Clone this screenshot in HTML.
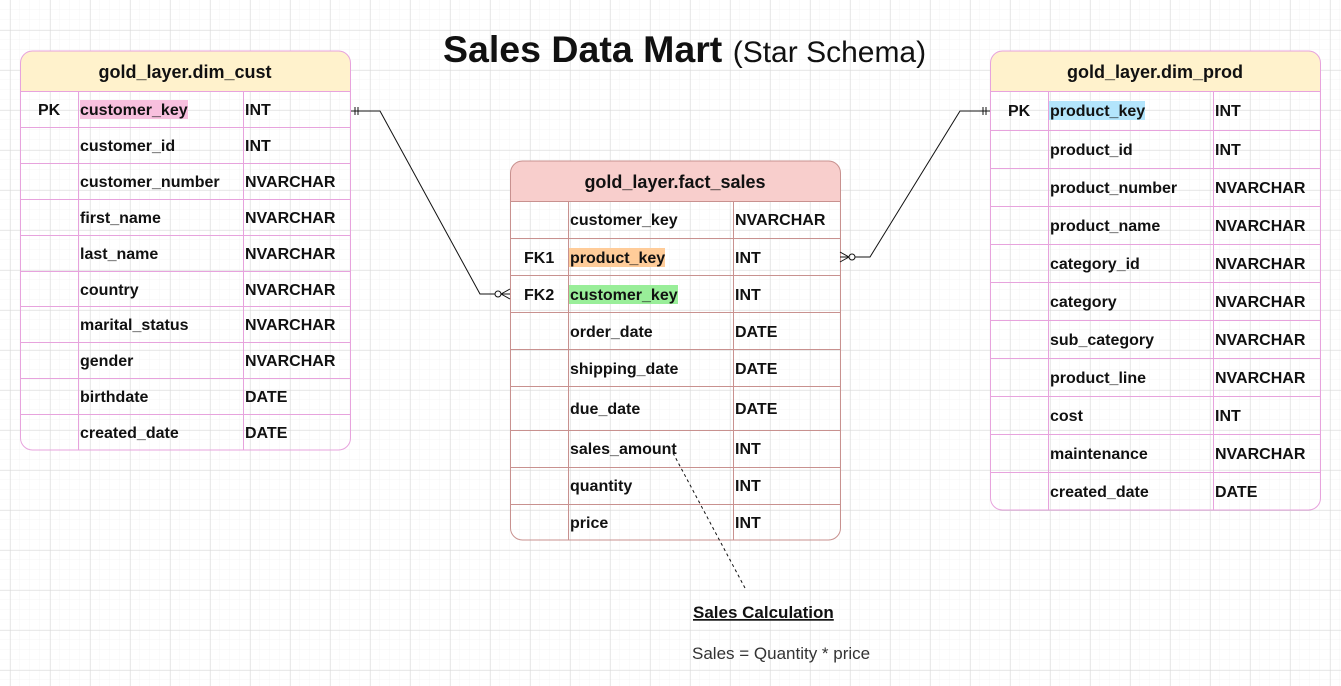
<!DOCTYPE html>
<html><head><meta charset="utf-8"><style>
html,body{margin:0;padding:0;background:#fff;}
svg{display:block;}
text{font-family:"Liberation Sans",Arial,sans-serif;}
.f{font-size:16px;font-weight:bold;fill:#111;}
.h{font-size:18px;font-weight:bold;fill:#111;}
</style></head><body>
<svg width="1341" height="686" viewBox="0 0 1341 686" xmlns="http://www.w3.org/2000/svg">
<defs>
<pattern id="mi" width="10" height="10" patternUnits="userSpaceOnUse" x="0" y="0">
<path d="M10 0V10M0 10H10" stroke="#f4f4f4" stroke-width="1" fill="none"/>
</pattern>
<pattern id="ma" width="40" height="40" patternUnits="userSpaceOnUse" x="10.5" y="30.5">
<path d="M0 0V40M0 0H40" stroke="#d6d6d6" stroke-width="1" fill="none"/>
</pattern>
</defs>
<rect width="1341" height="686" fill="url(#mi)"/>
<rect width="1341" height="686" fill="url(#ma)"/>

<!-- Title -->
<text x="443" y="62" style="font-size:37.5px;font-weight:bold;fill:#111">Sales Data Mart <tspan style="font-size:30px;font-weight:normal">(Star Schema)</tspan></text>

<!-- dim_cust -->
<g stroke="#e7a3dd" stroke-width="1" fill="none">
<path d="M20.5 91.5V63a12 12 0 0 1 12-12h306a12 12 0 0 1 12 12v28.5Z" fill="#fff2cc"/>
<path d="M20.5 91.5V438a12 12 0 0 0 12 12h306a12 12 0 0 0 12-12V91.5"/>
<path d="M20.5 127.5H350.5M20.5 163.5H350.5M20.5 199.5H350.5M20.5 235.5H350.5M20.5 271.5H350.5M20.5 306.5H350.5M20.5 342.5H350.5M20.5 378.5H350.5M20.5 414.5H350.5M78.5 91.5V450M243.5 91.5V450"/>
</g>
<text x="185" y="78" text-anchor="middle" class="h">gold_layer.dim_cust</text>
<rect x="80" y="100" width="108" height="19" fill="#f8c0de"/>
<g class="f">
<text x="38" y="115">PK</text><text x="80" y="115">customer_key</text><text x="245" y="115">INT</text>
<text x="80" y="151">customer_id</text><text x="245" y="151">INT</text>
<text x="80" y="187">customer_number</text><text x="245" y="187">NVARCHAR</text>
<text x="80" y="223">first_name</text><text x="245" y="223">NVARCHAR</text>
<text x="80" y="259">last_name</text><text x="245" y="259">NVARCHAR</text>
<text x="80" y="295">country</text><text x="245" y="295">NVARCHAR</text>
<text x="80" y="330">marital_status</text><text x="245" y="330">NVARCHAR</text>
<text x="80" y="366">gender</text><text x="245" y="366">NVARCHAR</text>
<text x="80" y="402">birthdate</text><text x="245" y="402">DATE</text>
<text x="80" y="438">created_date</text><text x="245" y="438">DATE</text>
</g>

<!-- fact_sales -->
<g stroke="#c8918f" stroke-width="1" fill="none">
<path d="M510.5 201.5V173a12 12 0 0 1 12-12h306a12 12 0 0 1 12 12v28.5Z" fill="#f8cecc"/>
<path d="M510.5 201.5V528a12 12 0 0 0 12 12h306a12 12 0 0 0 12-12V201.5"/>
<path d="M510.5 238.5H840.5M510.5 275.5H840.5M510.5 312.5H840.5M510.5 349.5H840.5M510.5 386.5H840.5M510.5 430.5H840.5M510.5 467.5H840.5M510.5 504.5H840.5M568.5 201.5V540M733.5 201.5V540"/>
</g>
<text x="675" y="188" text-anchor="middle" class="h">gold_layer.fact_sales</text>
<rect x="569" y="248" width="96" height="19" fill="#ffcc99"/>
<rect x="569" y="285" width="109" height="19" fill="#99ee99"/>
<g class="f">
<text x="570" y="225">customer_key</text><text x="735" y="225">NVARCHAR</text>
<text x="524" y="263">FK1</text><text x="570" y="263">product_key</text><text x="735" y="263">INT</text>
<text x="524" y="300">FK2</text><text x="570" y="300">customer_key</text><text x="735" y="300">INT</text>
<text x="570" y="337">order_date</text><text x="735" y="337">DATE</text>
<text x="570" y="374">shipping_date</text><text x="735" y="374">DATE</text>
<text x="570" y="414">due_date</text><text x="735" y="414">DATE</text>
<text x="570" y="454">sales_amount</text><text x="735" y="454">INT</text>
<text x="570" y="491">quantity</text><text x="735" y="491">INT</text>
<text x="570" y="528">price</text><text x="735" y="528">INT</text>
</g>

<!-- dim_prod -->
<g stroke="#e7a3dd" stroke-width="1" fill="none">
<path d="M990.5 91.5V63a12 12 0 0 1 12-12h306a12 12 0 0 1 12 12v28.5Z" fill="#fff2cc"/>
<path d="M990.5 91.5V498a12 12 0 0 0 12 12h306a12 12 0 0 0 12-12V91.5"/>
<path d="M990.5 130.5H1320.5M990.5 168.5H1320.5M990.5 206.5H1320.5M990.5 244.5H1320.5M990.5 282.5H1320.5M990.5 320.5H1320.5M990.5 358.5H1320.5M990.5 396.5H1320.5M990.5 434.5H1320.5M990.5 472.5H1320.5M1048.5 91.5V510M1213.5 91.5V510"/>
</g>
<text x="1155" y="78" text-anchor="middle" class="h">gold_layer.dim_prod</text>
<rect x="1049" y="101" width="96" height="19" fill="#b3e5fc"/>
<g class="f">
<text x="1008" y="116">PK</text><text x="1050" y="116">product_key</text><text x="1215" y="116">INT</text>
<text x="1050" y="155">product_id</text><text x="1215" y="155">INT</text>
<text x="1050" y="193">product_number</text><text x="1215" y="193">NVARCHAR</text>
<text x="1050" y="231">product_name</text><text x="1215" y="231">NVARCHAR</text>
<text x="1050" y="269">category_id</text><text x="1215" y="269">NVARCHAR</text>
<text x="1050" y="307">category</text><text x="1215" y="307">NVARCHAR</text>
<text x="1050" y="345">sub_category</text><text x="1215" y="345">NVARCHAR</text>
<text x="1050" y="383">product_line</text><text x="1215" y="383">NVARCHAR</text>
<text x="1050" y="421">cost</text><text x="1215" y="421">INT</text>
<text x="1050" y="459">maintenance</text><text x="1215" y="459">NVARCHAR</text>
<text x="1050" y="497">created_date</text><text x="1215" y="497">DATE</text>
</g>

<!-- connectors -->
<g stroke="#111" stroke-width="1" fill="none">
<path d="M351 111H380L480 294H495"/>
<path d="M355 107V115M358 107V115"/>
<circle cx="498" cy="294" r="3"/>
<path d="M501 294H510M501 294L510 289M501 294L510 299"/>
<path d="M990 111H960L870 257H855"/>
<path d="M986 107V115M983 107V115"/>
<circle cx="852" cy="257" r="3"/>
<path d="M849 257H840M849 257L840 252M849 257L840 262"/>
<path d="M673 453L745 588" stroke-dasharray="3 3"/>
</g>

<text x="693" y="618" style="font-size:17px;font-weight:bold;fill:#111;text-decoration:underline">Sales Calculation</text>
<text x="692" y="659" style="font-size:17px;fill:#333">Sales = Quantity * price</text>
</svg>
</body></html>
